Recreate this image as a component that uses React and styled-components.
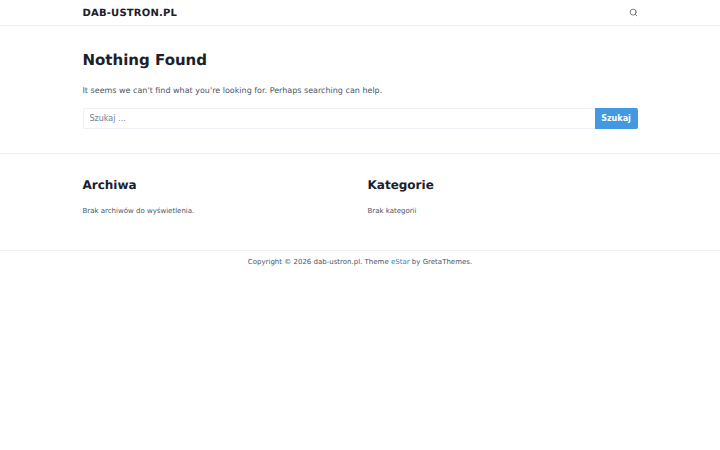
import React from 'react';
import styled, {createGlobalStyle} from 'styled-components';

const GlobalStyle = createGlobalStyle`
    html, body {
        margin: 0;
        background: #fff;
    }
    body {
        font-family: "DejaVu Sans", sans-serif;
        color: #4a5568;
        text-rendering: geometricPrecision;
    }
`;

const Container = styled.div`
    width: 555px;
    margin: 0 auto;
`;

const Header = styled.header`
    height: 25px;
    border-bottom: 1px solid #edf2f7;
`;

const HeaderInner = styled(Container)`
    height: 25px;
    display: flex;
    align-items: center;
    justify-content: space-between;
`;

const Logo = styled.a`
    padding-top: 1px;
    font-size: 10px;
    font-weight: 700;
    letter-spacing: 0.2px;
    color: #1a202c;
`;

const SearchToggle = styled.svg`
    width: 9px;
    height: 9px;
    color: #4a5568;
`;

const Main = styled.main`
    padding: 24px 0;
    border-bottom: 1px solid #edf2f7;
`;

const Title = styled.h1`
    margin: 0 0 13px;
    font-size: 15px;
    line-height: 20px;
    font-weight: 700;
    color: #1a202c;
`;

const Lead = styled.p`
    margin: 0 0 10px;
    font-size: 8px;
    line-height: 15px;
`;

const SearchForm = styled.form`
    display: flex;
    height: 21px;
`;

const SearchInput = styled.input`
    flex: 1;
    min-width: 0;
    box-sizing: border-box;
    padding: 0 6px;
    border: 1px solid #edf2f7;
    border-right: 0;
    border-radius: 2px 0 0 2px;
    outline: none;
    font: 8px "DejaVu Sans", sans-serif;
    color: #4a5568;

    &::placeholder {
        color: #718096;
        opacity: 1;
    }
`;

const SearchButton = styled.button`
    width: 43px;
    padding: 0;
    border: 0;
    border-radius: 0 2px 2px 0;
    background: #4299e1;
    color: #fff;
    font: 700 8px "DejaVu Sans", sans-serif;
`;

const Widgets = styled(Container)`
    display: grid;
    grid-template-columns: 1fr 1fr;
    column-gap: 15px;
    padding: 23px 0 33px;
`;

const WidgetTitle = styled.h2`
    margin: 0 0 13px;
    font-size: 12px;
    line-height: 16px;
    font-weight: 700;
    color: #1a202c;
`;

const WidgetText = styled.p`
    margin: 0;
    font-size: 7px;
    line-height: 11px;
`;

const Footer = styled.footer`
    border-top: 1px solid #edf2f7;
    padding-top: 6px;
    text-align: center;
    font-size: 7px;
    line-height: 11px;
`;

const FooterLink = styled.a`
    color: #3182ce;
`;

export default function App() {
    return (
        <>
            <GlobalStyle />
            <Header>
                <HeaderInner>
                    <Logo>DAB-USTRON.PL</Logo>
                    <SearchToggle viewBox='0 0 24 24' fill='none' stroke='currentColor' strokeWidth='2' strokeLinecap='round'>
                        <circle cx='11' cy='11' r='8' />
                        <line x1='21' y1='21' x2='16.65' y2='16.65' />
                    </SearchToggle>
                </HeaderInner>
            </Header>
            <Main>
                <Container>
                    <Title>Nothing Found</Title>
                    <Lead>It seems we can't find what you're looking for. Perhaps searching can help.</Lead>
                    <SearchForm>
                        <SearchInput placeholder='Szukaj …' />
                        <SearchButton type='button'>Szukaj</SearchButton>
                    </SearchForm>
                </Container>
            </Main>
            <Widgets>
                <section>
                    <WidgetTitle>Archiwa</WidgetTitle>
                    <WidgetText>Brak archiwów do wyświetlenia.</WidgetText>
                </section>
                <section>
                    <WidgetTitle>Kategorie</WidgetTitle>
                    <WidgetText>Brak kategorii</WidgetText>
                </section>
            </Widgets>
            <Footer>
                Copyright © 2026 dab-ustron.pl. Theme <FooterLink>eStar</FooterLink> by GretaThemes.
            </Footer>
        </>
    );
}
